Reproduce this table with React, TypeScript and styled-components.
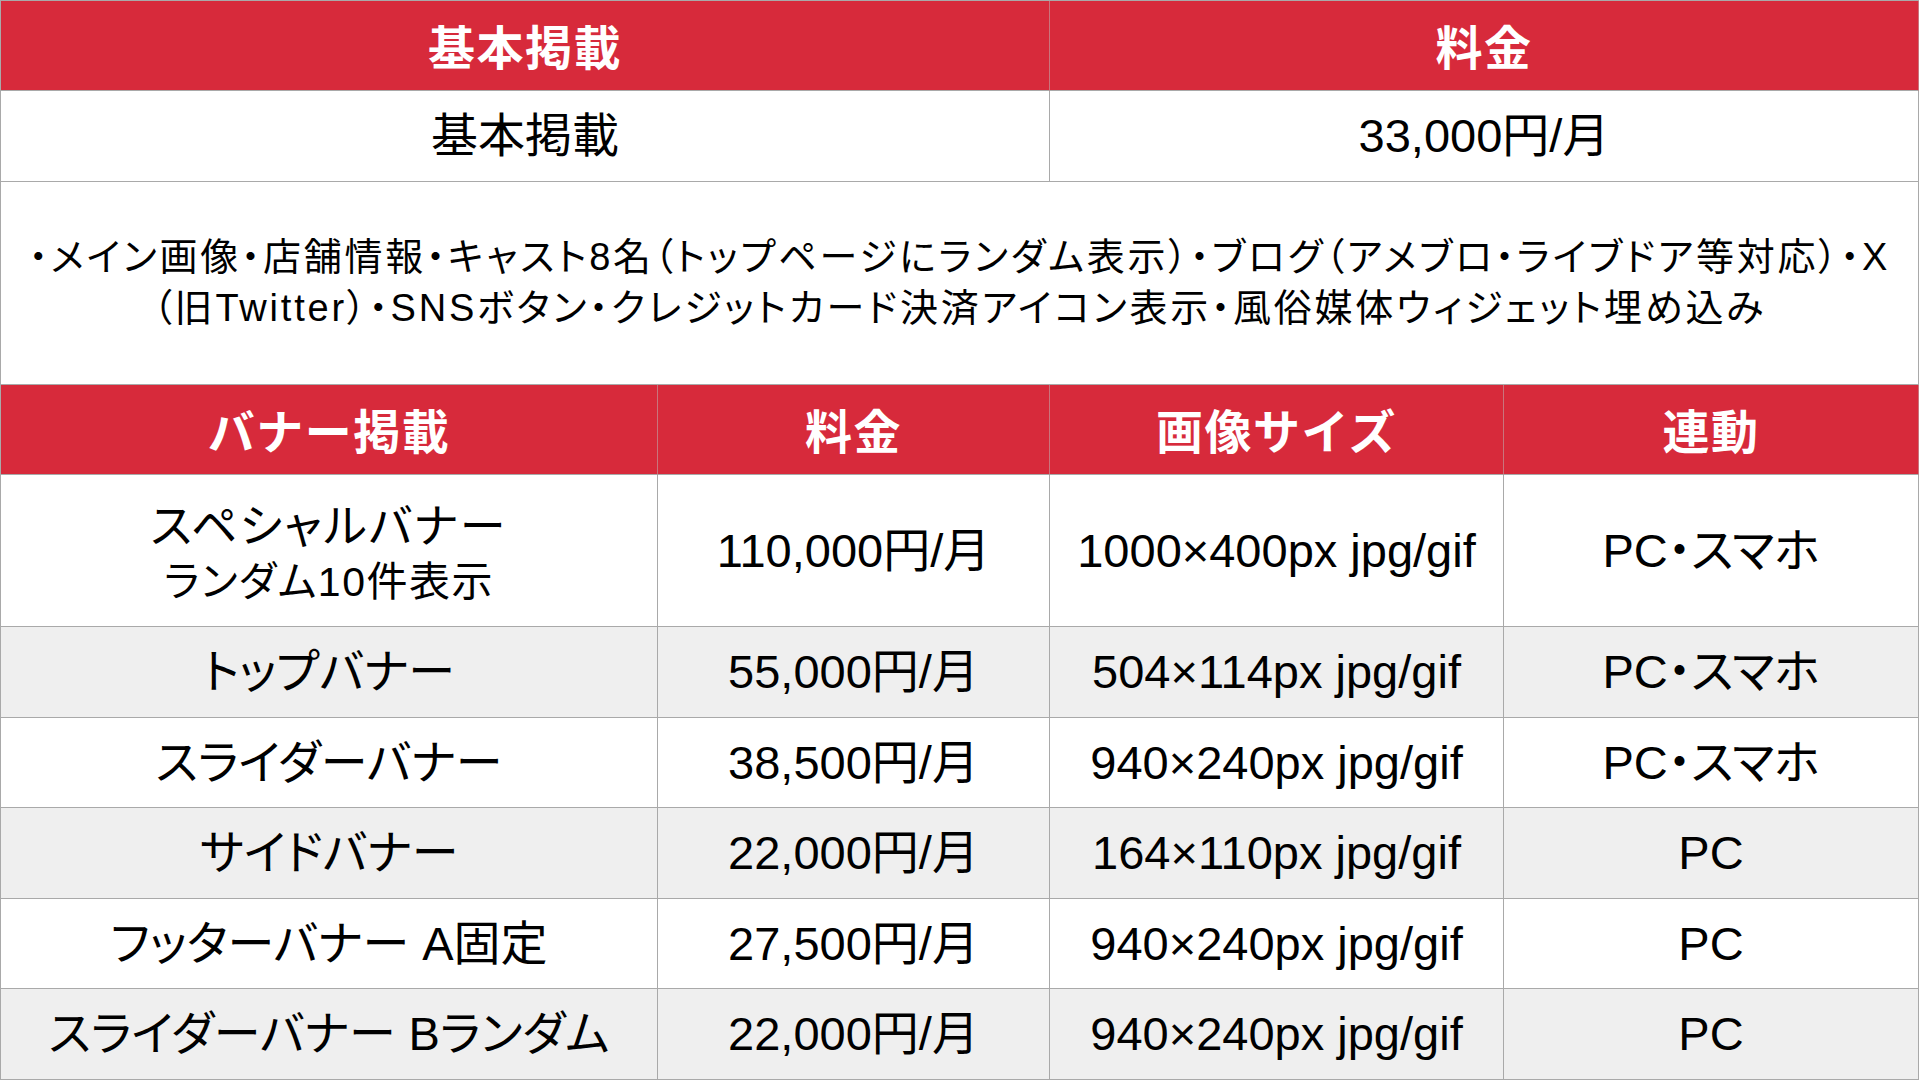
import React from "react";
import styled, { createGlobalStyle } from "styled-components";

const Global = createGlobalStyle`
  html, body { margin: 0; padding: 0; background: #ffffff; }
  body { width: 1919px; height: 1080px; overflow: hidden; }
  * { box-sizing: border-box; }
`;

const LINE = "#a9a9a9";
const RED = "#d72a3b";

const Sheet = styled.div`
  width: 1919px;
  height: 1080px;
  display: flex;
  flex-direction: column;
  border-top: 1px solid ${LINE};
  border-left: 1px solid ${LINE};
  font-family: "Liberation Sans", Arial, "Noto Sans CJK JP", sans-serif;
  color: #000;
`;

const Grid = styled.div<{ $cols: string }>`
  display: grid;
  grid-template-columns: ${(p) => p.$cols};
`;

const HeadCell = styled.div<{ $h: number }>`
  height: ${(p) => p.$h}px;
  background: ${RED};
  color: #fff;
  font-weight: 700;
  font-size: 47px;
  letter-spacing: 1.5px;
  display: flex;
  align-items: center;
  justify-content: center;
  border-right: 1px solid #c9747c;
  border-bottom: 1px solid ${LINE};
  padding-bottom: 3px;
`;

const Cell = styled.div<{ $h: number; $shade?: boolean }>`
  height: ${(p) => p.$h}px;
  background: ${(p) => (p.$shade ? "#efefef" : "#ffffff")};
  font-size: 47px;
  font-feature-settings: "palt";
  display: flex;
  flex-direction: column;
  align-items: center;
  justify-content: center;
  border-right: 1px solid ${LINE};
  border-bottom: 1px solid ${LINE};
  white-space: nowrap;
  line-height: 1.1;
`;

const MainLine = styled.span`
  font-size: 46px;
  letter-spacing: 2px;
  line-height: 1.15;
  margin-top: 5px;
`;

const SubLine = styled.span`
  font-size: 41px;
  letter-spacing: 1.5px;
  line-height: 1.15;
  margin-top: 6px;
`;

const Desc = styled.div`
  height: 204px;
  display: flex;
  flex-direction: column;
  align-items: center;
  justify-content: center;
  font-size: 38px;
  letter-spacing: 2.8px;
  line-height: 51px;
  font-feature-settings: "palt";
  white-space: nowrap;
  border-right: 1px solid ${LINE};
  border-bottom: 1px solid ${LINE};
`;

type Row = { name: React.ReactNode; price: string; size: string; link: string; h: number };

const rows: Row[] = [
  {
    name: (
      <>
        <MainLine>スペシャルバナー</MainLine>
        <SubLine>ランダム10件表示</SubLine>
      </>
    ),
    price: "110,000円/月",
    size: "1000×400px jpg/gif",
    link: "PC・スマホ",
    h: 152,
  },
  { name: "トップバナー", price: "55,000円/月", size: "504×114px jpg/gif", link: "PC・スマホ", h: 90.6 },
  { name: "スライダーバナー", price: "38,500円/月", size: "940×240px jpg/gif", link: "PC・スマホ", h: 90.6 },
  { name: "サイドバナー", price: "22,000円/月", size: "164×110px jpg/gif", link: "PC", h: 90.6 },
  { name: "フッターバナー A固定", price: "27,500円/月", size: "940×240px jpg/gif", link: "PC", h: 90.6 },
  { name: "スライダーバナー Bランダム", price: "22,000円/月", size: "940×240px jpg/gif", link: "PC", h: 90.6 },
];

export default function App() {
  return (
    <>
      <Global />
      <Sheet>
        <Grid $cols="1049px 1fr">
          <HeadCell $h={90}>基本掲載</HeadCell>
          <HeadCell $h={90}>料金</HeadCell>
          <Cell $h={91}>基本掲載</Cell>
          <Cell $h={91}>33,000円/月</Cell>
        </Grid>
        <Desc>
          <span>・メイン画像・店舗情報・キャスト8名（トップページにランダム表示）・ブログ（アメブロ・ライブドア等対応）・X</span>
          <span>（旧Twitter）・SNSボタン・クレジットカード決済アイコン表示・風俗媒体ウィジェット埋め込み</span>
        </Desc>
        <Grid $cols="657px 392px 454px 1fr">
          <HeadCell $h={90}>バナー掲載</HeadCell>
          <HeadCell $h={90}>料金</HeadCell>
          <HeadCell $h={90}>画像サイズ</HeadCell>
          <HeadCell $h={90}>連動</HeadCell>
          {rows.map((r, i) => (
            <React.Fragment key={i}>
              <Cell $h={r.h} $shade={i % 2 === 1}>{r.name}</Cell>
              <Cell $h={r.h} $shade={i % 2 === 1}>{r.price}</Cell>
              <Cell $h={r.h} $shade={i % 2 === 1}>{r.size}</Cell>
              <Cell $h={r.h} $shade={i % 2 === 1}>{r.link}</Cell>
            </React.Fragment>
          ))}
        </Grid>
      </Sheet>
    </>
  );
}
